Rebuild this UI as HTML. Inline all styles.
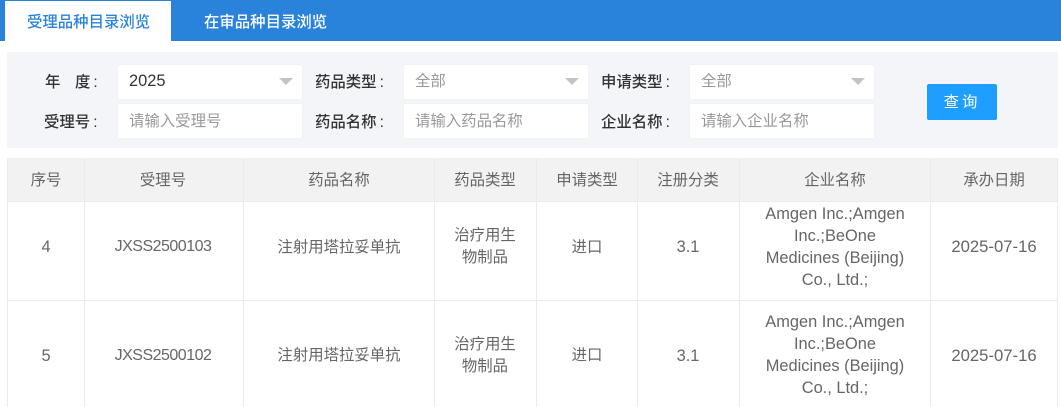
<!DOCTYPE html>
<html lang="zh"><head><meta charset="utf-8"><style>
html,body{margin:0;padding:0;width:1061px;height:407px;overflow:hidden;background:#fff}
body{position:relative;font-family:"Liberation Sans","Noto Sans CJK SC",sans-serif;font-size:15.4px;color:#666}
#w{position:absolute;left:0;top:0;width:1061px;height:407px;filter:blur(.35px)}
.bar{position:absolute;left:0;top:0;width:1061px;height:41px;background:#2a83da}
.tab{position:absolute;left:5px;top:1px;width:166px;height:40px;background:#fff}
.t{position:absolute;top:13px;font-size:15.4px;font-weight:500;line-height:20px}
.panel{position:absolute;left:7px;top:52px;width:1051px;height:96px;background:#f3f5f9}
.inp{position:absolute;width:186px;background:#fff;border:1px solid #f0f2f5;border-radius:3px;box-sizing:border-box}
.v{position:absolute;font-size:15.4px;line-height:20px;color:#999;white-space:nowrap}
.l{position:absolute;font-size:15.4px;line-height:20px;color:#333;font-weight:500;white-space:nowrap}
.l i{font-style:normal;margin-left:3px}
.arr{position:absolute;width:0;height:0;border-left:7px solid transparent;border-right:7px solid transparent;border-top:7px solid #c4c4c4}
.btn{position:absolute;left:927px;top:84px;width:70px;height:36px;background:#1e9fff;border-radius:2px;color:#fff;text-align:center;line-height:37px;font-size:15.4px;letter-spacing:3px}
.head{position:absolute;left:7px;top:158px;width:1051px;height:44px;background:#f2f2f2}
.hl{position:absolute;background:#ebebeb}
.h{position:absolute;top:171px;line-height:20px;color:#666;font-size:15.4px;transform:translateX(-50%);white-space:nowrap}
.d{position:absolute;line-height:22px;font-size:15.4px;color:#666;text-align:center;transform:translateX(-50%);white-space:nowrap}
.en{font-size:16.4px}
.dt{font-size:16.7px}
.no{font-size:16px;letter-spacing:-.5px}
</style></head><body><div id="w">
<div class="bar"></div><div class="tab"></div>
<div class="t" style="left:27px;color:#2a83da">受理品种目录浏览</div>
<div class="t" style="left:204px;color:#fff">在审品种目录浏览</div>
<div class="panel"></div>

<div class="l" style="left:45px;top:73px">年</div>
<div class="l" style="left:75px;top:73px">度<i>:</i></div>
<div class="l" style="left:44px;top:113px">受理号<i>:</i></div>
<div class="l" style="left:315px;top:73px">药品类型<i>:</i></div>
<div class="l" style="left:315px;top:113px">药品名称<i>:</i></div>
<div class="l" style="left:601px;top:73px">申请类型<i>:</i></div>
<div class="l" style="left:601px;top:113px">企业名称<i>:</i></div>

<div class="inp" style="left:117px;top:64px;height:36px"></div>
<div class="inp" style="left:117px;top:103px;height:36px"></div>
<div class="inp" style="left:403px;top:64px;height:36px"></div>
<div class="inp" style="left:403px;top:103px;height:36px"></div>
<div class="inp" style="left:689px;top:64px;height:36px"></div>
<div class="inp" style="left:689px;top:103px;height:36px"></div>

<div class="v" style="left:129px;top:71px;color:#333;font-size:16.4px">2025</div>
<div class="v" style="left:129px;top:112px">请输入受理号</div>
<div class="v" style="left:415px;top:72px">全部</div>
<div class="v" style="left:415px;top:112px">请输入药品名称</div>
<div class="v" style="left:701px;top:72px">全部</div>
<div class="v" style="left:701px;top:112px">请输入企业名称</div>
<div class="arr" style="left:279px;top:78px"></div>
<div class="arr" style="left:565px;top:78px"></div>
<div class="arr" style="left:851px;top:78px"></div>
<div class="btn">查询</div>

<div class="head"></div>
<div class="hl" style="left:7px;top:158px;width:1px;height:249px"></div>
<div class="hl" style="left:84px;top:158px;width:1px;height:249px"></div>
<div class="hl" style="left:243px;top:158px;width:1px;height:249px"></div>
<div class="hl" style="left:434px;top:158px;width:1px;height:249px"></div>
<div class="hl" style="left:536px;top:158px;width:1px;height:249px"></div>
<div class="hl" style="left:637px;top:158px;width:1px;height:249px"></div>
<div class="hl" style="left:739px;top:158px;width:1px;height:249px"></div>
<div class="hl" style="left:930px;top:158px;width:1px;height:249px"></div>
<div class="hl" style="left:1057px;top:158px;width:1px;height:249px"></div>
<div class="hl" style="left:7px;top:201px;width:1051px;height:1px"></div>
<div class="hl" style="left:7px;top:300px;width:1051px;height:1px"></div>

<div class="h" style="left:46px">序号</div>
<div class="h" style="left:163px">受理号</div>
<div class="h" style="left:339px">药品名称</div>
<div class="h" style="left:485px">药品类型</div>
<div class="h" style="left:587px">申请类型</div>
<div class="h" style="left:688px">注册分类</div>
<div class="h" style="left:835px">企业名称</div>
<div class="h" style="left:994px">承办日期</div>

<div class="d en" style="left:46px;top:236px">4</div>
<div class="d no" style="left:163px;top:236px">JXSS2500103</div>
<div class="d" style="left:339px;top:237px">注射用塔拉妥单抗</div>
<div class="d" style="left:485px;top:225px">治疗用生<br>物制品</div>
<div class="d" style="left:587px;top:237px">进口</div>
<div class="d en" style="left:688px;top:236px">3.1</div>
<div class="d en" style="left:835px;top:203px">Amgen Inc.;Amgen<br>Inc.;BeOne<br>Medicines (Beijing)<br>Co., Ltd.;</div>
<div class="d dt" style="left:994px;top:236px">2025-07-16</div>

<div class="d en" style="left:46px;top:345px">5</div>
<div class="d no" style="left:163px;top:345px">JXSS2500102</div>
<div class="d" style="left:339px;top:345px">注射用塔拉妥单抗</div>
<div class="d" style="left:485px;top:334px">治疗用生<br>物制品</div>
<div class="d" style="left:587px;top:345px">进口</div>
<div class="d en" style="left:688px;top:345px">3.1</div>
<div class="d en" style="left:835px;top:311px">Amgen Inc.;Amgen<br>Inc.;BeOne<br>Medicines (Beijing)<br>Co., Ltd.;</div>
<div class="d dt" style="left:994px;top:345px">2025-07-16</div>
</div></body></html>
